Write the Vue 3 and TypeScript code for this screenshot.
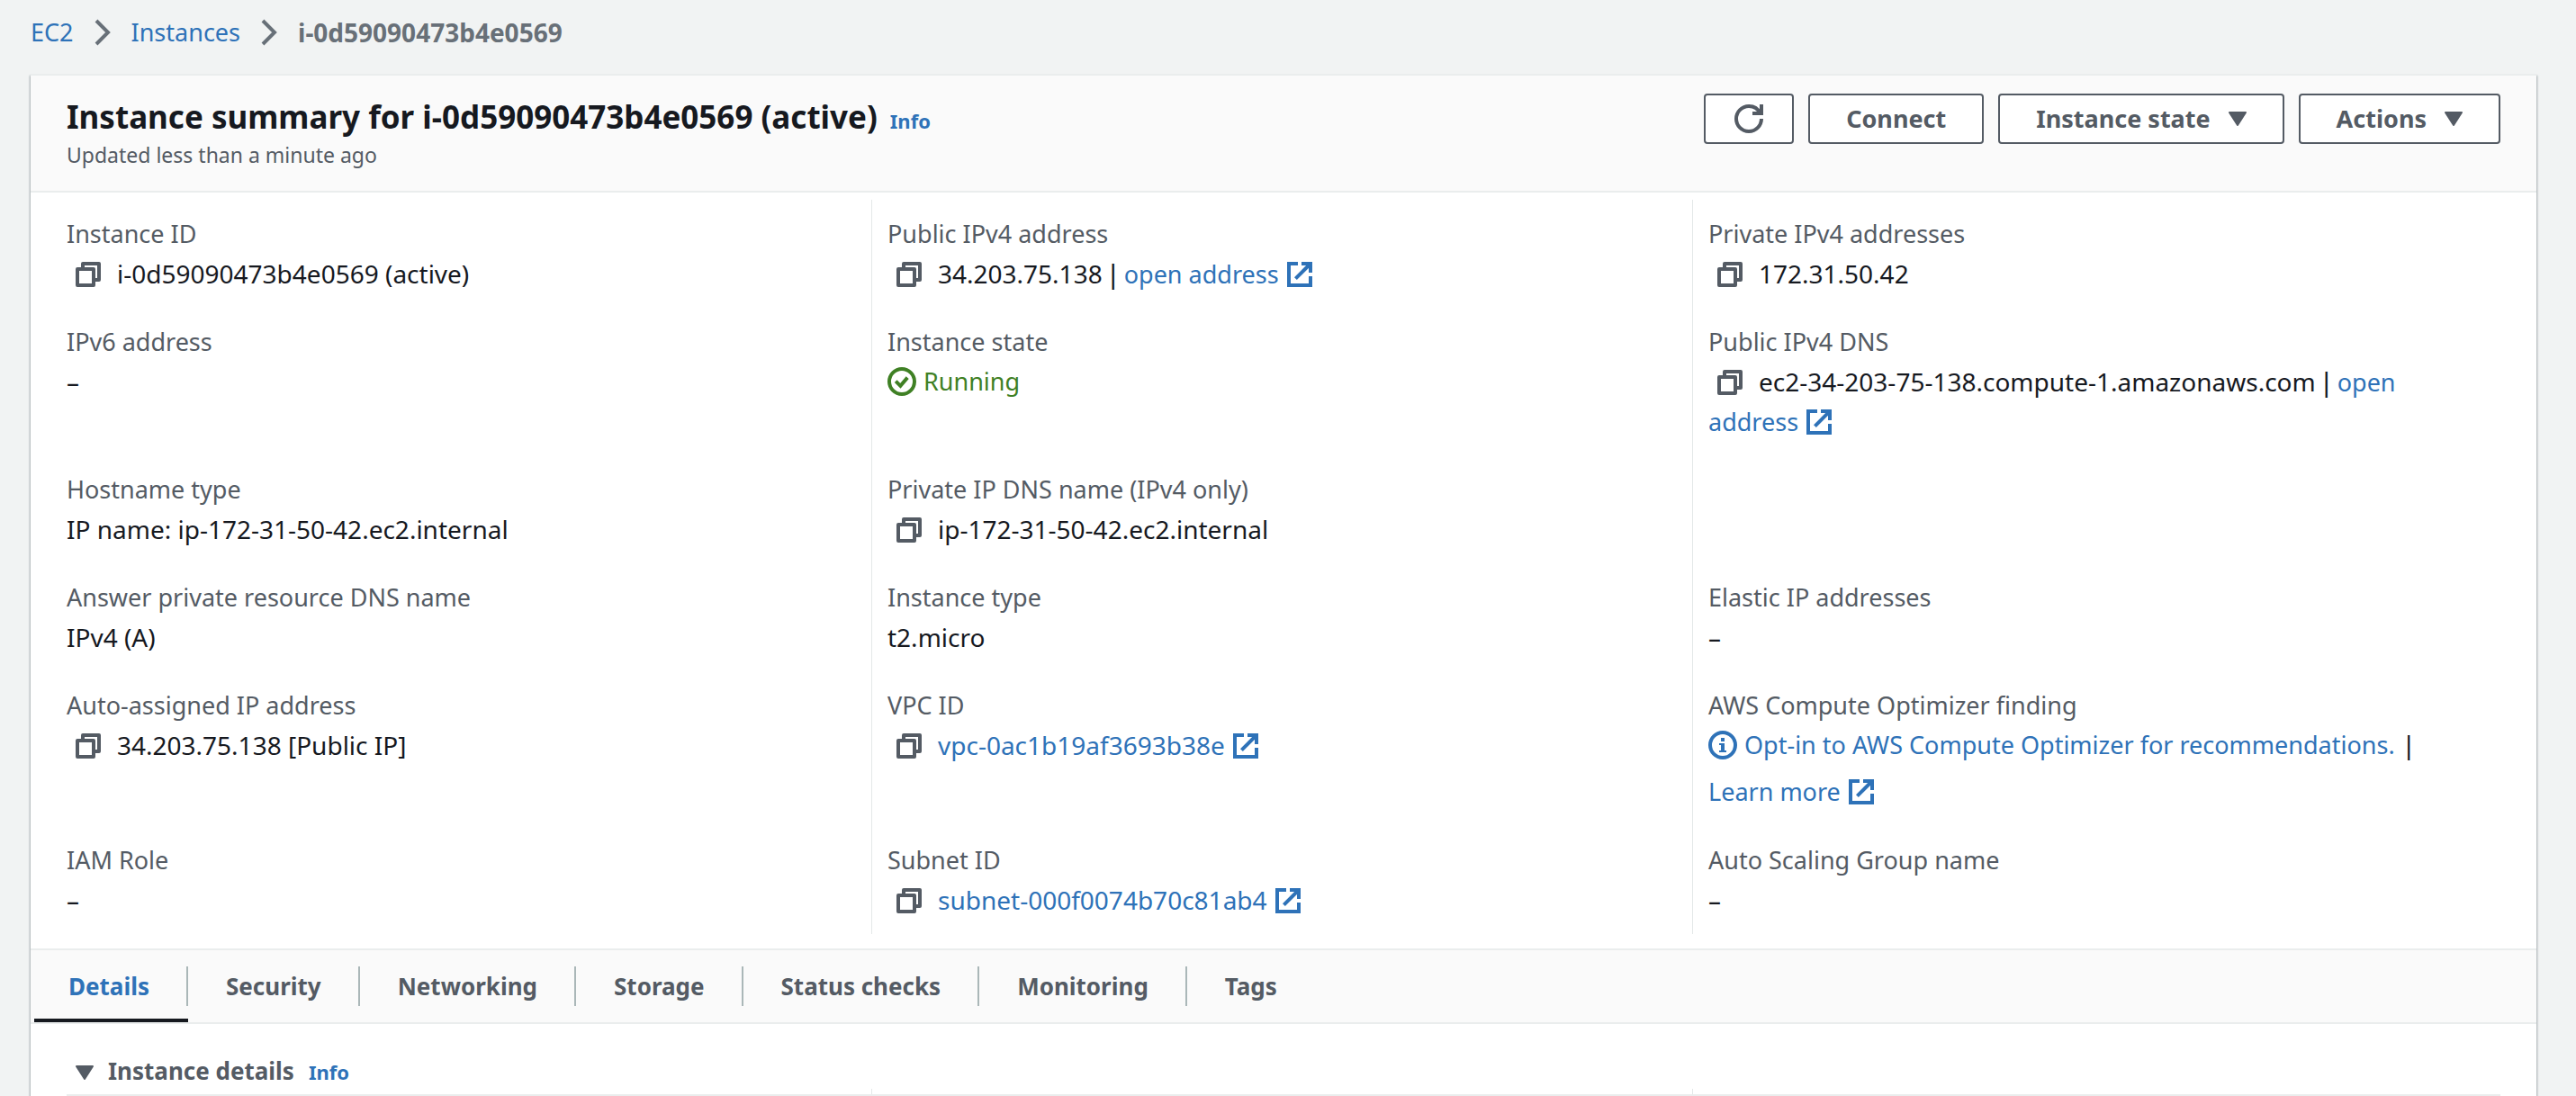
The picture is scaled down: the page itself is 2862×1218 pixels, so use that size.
<script setup lang="ts">
import { defineComponent, h, ref } from 'vue'

type IconName = 'copy' | 'external' | 'check' | 'info' | 'refresh'

const iconPaths: Record<IconName, string[]> = {
  copy: ['M2 5h9v9H2z', 'M5 4V2h9v9h-2'],
  external: ['M7 2H2v12h12V9', 'M9 2h5v5', 'M14 2L5.7 10.3'],
  check: ['M8 1a7 7 0 1 1 0 14a7 7 0 1 1 0-14z', 'M4.6 7.8l2.6 2.6 3.9-4.6'],
  info: ['M8 1a7 7 0 1 1 0 14a7 7 0 1 1 0-14z'],
  refresh: ['M10 5h5V0', 'M15 8a7 7 0 0 1-14 0a7 7 0 0 1 7-7a6.9 6.9 0 0 1 6.3 4'],
}

const solidPaths: Partial<Record<IconName, string>> = {
  info: 'M7 4h2v2H7z M6 7h3v4h1v1H6v-1h1V8H6z',
}

const Icon = defineComponent({
  props: { name: { type: String, required: true } },
  setup(props) {
    return () => {
      const name = props.name as IconName
      const shapes = iconPaths[name].map((d) => h('path', { d }))
      const solid = solidPaths[name]
      if (solid) shapes.push(h('path', { d: solid, fill: 'currentColor', stroke: 'none' }))
      return h(
        'svg',
        { viewBox: '0 0 16 16', width: 32, height: 32, fill: 'none', stroke: 'currentColor', 'stroke-width': 2, 'stroke-linejoin': name === 'copy' ? 'round' : 'miter', 'aria-hidden': 'true' },
        shapes,
      )
    }
  },
})

interface Field {
  label: string
  text?: string
  copy?: boolean
  linkText?: string
  openAddress?: boolean
  kind?: 'running' | 'optimizer'
}

const fields: (Field | null)[] = [
  { label: 'Instance ID', text: 'i-0d59090473b4e0569 (active)', copy: true },
  { label: 'Public IPv4 address', text: '34.203.75.138', copy: true, openAddress: true },
  { label: 'Private IPv4 addresses', text: '172.31.50.42', copy: true },
  { label: 'IPv6 address', text: '–' },
  { label: 'Instance state', kind: 'running' },
  { label: 'Public IPv4 DNS', text: 'ec2-34-203-75-138.compute-1.amazonaws.com', copy: true, openAddress: true },
  { label: 'Hostname type', text: 'IP name: ip-172-31-50-42.ec2.internal' },
  { label: 'Private IP DNS name (IPv4 only)', text: 'ip-172-31-50-42.ec2.internal', copy: true },
  null,
  { label: 'Answer private resource DNS name', text: 'IPv4 (A)' },
  { label: 'Instance type', text: 't2.micro' },
  { label: 'Elastic IP addresses', text: '–' },
  { label: 'Auto-assigned IP address', text: '34.203.75.138 [Public IP]', copy: true },
  { label: 'VPC ID', linkText: 'vpc-0ac1b19af3693b38e', copy: true },
  { label: 'AWS Compute Optimizer finding', kind: 'optimizer' },
  { label: 'IAM Role', text: '–' },
  { label: 'Subnet ID', linkText: 'subnet-000f0074b70c81ab4', copy: true },
  { label: 'Auto Scaling Group name', text: '–' },
]

const tabs = ['Details', 'Security', 'Networking', 'Storage', 'Status checks', 'Monitoring', 'Tags']
const activeTab = ref('Details')
</script>

<template>
  <div class="page">
    <nav class="breadcrumb" aria-label="Breadcrumb">
      <a href="#ec2">EC2</a>
      <svg class="chevron" viewBox="0 0 20 30" aria-hidden="true"><path d="M3 2l13 13L3 28" /></svg>
      <a href="#instances">Instances</a>
      <svg class="chevron" viewBox="0 0 20 30" aria-hidden="true"><path d="M3 2l13 13L3 28" /></svg>
      <span class="current">i-0d59090473b4e0569</span>
    </nav>

    <main class="panel">
      <header class="summary-header">
        <div>
          <div class="title-row">
            <h1>Instance summary for i-0d59090473b4e0569 (active)</h1>
            <a class="info" href="#info">Info</a>
          </div>
          <p class="updated">Updated less than a minute ago</p>
        </div>
        <div class="actions">
          <button class="btn btn-icon" type="button" aria-label="Refresh"><Icon name="refresh" /></button>
          <button class="btn" type="button">Connect</button>
          <button class="btn" type="button">
            Instance state
            <svg class="caret" viewBox="0 0 20 16" aria-hidden="true"><path d="M1 1h18l-9 14z" /></svg>
          </button>
          <button class="btn" type="button">
            Actions
            <svg class="caret" viewBox="0 0 20 16" aria-hidden="true"><path d="M1 1h18l-9 14z" /></svg>
          </button>
        </div>
      </header>

      <section class="grid">
        <div v-for="(field, i) in fields" :key="i" class="cell">
          <template v-if="field">
            <div class="label">{{ field.label }}</div>
            <div v-if="field.kind === 'running'" class="status running"><Icon name="check" />Running</div>
            <div v-else-if="field.kind === 'optimizer'" class="optimizer">
              <a class="status" href="#opt-in"><Icon name="info" />Opt-in to AWS Compute Optimizer for recommendations.</a>
              <span class="divider">|</span>
              <a class="external" href="#learn-more">Learn more <Icon name="external" /></a>
            </div>
            <div v-else class="value">
              <button v-if="field.copy" class="copy" type="button" :aria-label="'Copy ' + field.label"><Icon name="copy" /></button>
              <template v-if="field.text">{{ field.text }}</template>
              <a v-if="field.linkText" class="external" href="#resource">{{ field.linkText }} <Icon name="external" /></a>
              <template v-if="field.openAddress">{{ ' ' }}<span class="divider tight">|</span> <a class="open" href="#open">open <span class="external">address <Icon name="external" /></span></a></template>
            </div>
          </template>
        </div>
      </section>

      <div class="tabs" role="tablist">
        <button
          v-for="tab in tabs"
          :key="tab"
          class="tab"
          :class="{ active: tab === activeTab }"
          type="button"
          role="tab"
          :aria-selected="tab === activeTab"
          @click="activeTab = tab"
        >
          <span>{{ tab }}</span>
        </button>
      </div>

      <section class="details">
        <div class="details-header">
          <svg class="caret" viewBox="0 0 20 16" aria-hidden="true"><path d="M1 1h18l-9 14z" /></svg>
          <h2>Instance details</h2>
          <a class="info" href="#details-info">Info</a>
        </div>
        <div class="grid-edge"><i></i><i></i><i></i></div>
      </section>
    </main>
  </div>
</template>

<style>
body {
  margin: 0;
  background: #f1f3f3;
}
</style>

<style scoped>
.page {
  display: flex;
  flex-direction: column;
  min-height: 100vh;
  color: #16191f;
  font-family: "Noto Sans", "Open Sans", sans-serif;
  font-size: 27px;
  line-height: 44px;
}
a {
  color: #2e72b8;
  text-decoration: none;
}
button {
  margin: 0;
  font: inherit;
  cursor: pointer;
}
.breadcrumb {
  display: flex;
  align-items: center;
  gap: 22px;
  padding: 14px 34px 24px;
}
.chevron {
  width: 20px;
  height: 30px;
  fill: none;
  stroke: #687078;
  stroke-width: 4;
}
.current {
  color: #687078;
  font-size: 28px;
  font-weight: 700;
}
.panel {
  flex: 1;
  margin: 0 44px 0 34px;
  border-top: 2px solid #eaeded;
  background: #fff;
  box-shadow: 1px 2px 2px rgba(0, 28, 36, 0.3), -1px 2px 2px rgba(0, 28, 36, 0.3);
}
.summary-header {
  display: flex;
  justify-content: space-between;
  align-items: flex-start;
  padding: 20px 40px;
  border-bottom: 2px solid #eaeded;
  background: #fafafa;
}
.title-row {
  display: flex;
  align-items: baseline;
  gap: 14px;
  padding: 2px 0 0;
}
h1 {
  margin: 0;
  font-size: 35px;
  font-weight: 700;
  line-height: 48px;
}
.info {
  font-size: 22px;
  font-weight: 700;
  line-height: 28px;
}
.updated {
  margin: 0;
  padding: 0 0 2px;
  color: #545b64;
  font-size: 23px;
  line-height: 36px;
}
.actions {
  display: flex;
  gap: 16px;
}
.btn {
  display: flex;
  align-items: center;
  gap: 20px;
  height: 56px;
  padding: 0 40px;
  border: 2px solid #545b64;
  border-radius: 4px;
  background: #fff;
  color: #545b64;
  font-weight: 700;
}
.btn-icon {
  padding: 0 32px;
}
.caret {
  width: 20px;
  height: 16px;
  fill: #545b64;
  stroke: #545b64;
  stroke-width: 2;
  stroke-linejoin: round;
}
.grid,
.grid-edge {
  display: grid;
  grid-template-columns: repeat(3, 1fr);
}
.grid {
  padding: 8px 26px 16px 22px;
}
.cell {
  padding: 16px 18px;
}
.cell:not(:nth-child(3n + 1)) {
  padding-left: 17px;
  border-left: 1px solid #e4e8e8;
}
.label {
  color: #545b64;
}
.value {
  font-size: 28px;
}
.open {
  font-size: 27px;
  line-height: 40px;
}
.cell svg {
  vertical-align: -6px;
}
.divider {
  font-weight: 500;
}
.tight {
  margin: 0 -3px;
}
.external {
  white-space: nowrap;
}
.copy {
  margin-right: 8px;
  padding: 0 8px;
  border: 0;
  background: none;
  color: #545b64;
  line-height: 32px;
}
.status {
  display: flex;
  align-items: center;
  gap: 8px;
}
.running {
  color: #3f8024;
}
.optimizer {
  display: flex;
  flex-wrap: wrap;
  gap: 8px;
}
.tabs {
  display: flex;
  padding: 0 4px;
  border-top: 2px solid #eaeded;
  border-bottom: 2px solid #eaeded;
  background: #fafafa;
}
.tab {
  display: flex;
  padding: 18px 0 14px;
  border: 0;
  border-bottom: 4px solid transparent;
  background: none;
  color: #545b64;
  font-size: 26px;
  font-weight: 700;
}
.tab span {
  padding: 0 41px 0 42px;
  border-right: 2px solid #aab7b8;
}
.tab:first-child span {
  padding-left: 38px;
}
.tab:last-child span {
  border-right-color: transparent;
}
.tab.active {
  border-bottom-color: #16191f;
  color: #2e72b8;
}
.details {
  padding: 0 40px;
}
.details-header {
  display: flex;
  align-items: baseline;
  gap: 16px;
  padding: 32px 10px 0;
}
h2 {
  margin: 0;
  color: #545b64;
  font-size: 26px;
  font-weight: 700;
  line-height: 40px;
}
.grid-edge {
  height: 6px;
  margin: 0 -14px 0 -18px;
}
.grid-edge i:not(:first-child) {
  border-left: 1px solid #e4e8e8;
}
.details::after {
  content: "";
  display: block;
  border-bottom: 2px solid #eaeded;
}
</style>
